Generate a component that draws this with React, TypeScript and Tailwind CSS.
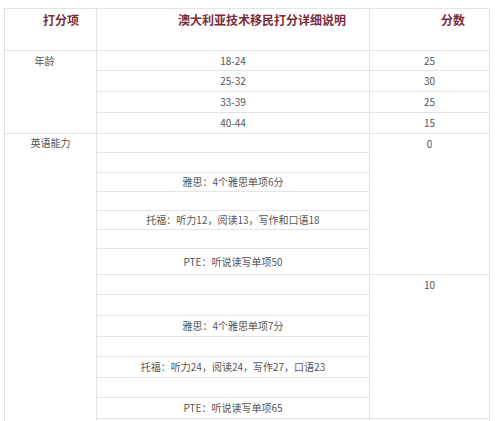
// 澳大利亚技术移民打分表 截图复刻

const ageRows = [
  { range: "18-24", score: "25", h: "h-[20px]" },
  { range: "25-32", score: "30", h: "h-[21px]" },
  { range: "33-39", score: "25", h: "h-[21px]" },
  { range: "40-44", score: "15", h: "h-[21px]" },
];

const englishBlocks = [
  {
    score: "0",
    rows: [
      { text: "", h: "h-[19px]" },
      { text: "", h: "h-[20px]" },
      { text: "雅思：4个雅思单项6分", h: "h-[19px]" },
      { text: "", h: "h-[19px]" },
      { text: "托福：听力12，阅读13，写作和口语18", h: "h-[19px]" },
      { text: "", h: "h-[19px]" },
      { text: "PTE：听说读写单项50", h: "h-[26px]" },
    ],
  },
  {
    score: "10",
    rows: [
      { text: "", h: "h-[20px]" },
      { text: "", h: "h-[21px]" },
      { text: "雅思：4个雅思单项7分", h: "h-[21px]" },
      { text: "", h: "h-[20px]" },
      { text: "托福：听力24，阅读24，写作27，口语23", h: "h-[21px]" },
      { text: "", h: "h-[20px]" },
      { text: "PTE：听说读写单项65", h: "h-[21px]" },
    ],
  },
];

const cell = "border border-[#e4e4e4] p-0";

export default function App() {
  return (
    <div className="h-[421px] overflow-hidden bg-white pl-[4px] pt-[8px] font-['Noto_Sans_CJK_SC','Noto_Sans',sans-serif] text-[10px] text-[#555]">
      <table className="w-[485px] table-fixed border-collapse">
        <colgroup>
          <col className="w-[92px]" />
          <col className="w-[273px]" />
          <col className="w-[120px]" />
        </colgroup>
        <tbody>
          {/* 表头 */}
          <tr className="h-[42px] align-top text-[12px] font-bold leading-[16px] text-[#7b2d3b]">
            <td className={`${cell} pl-[38px] pt-[3px]`}>打分项</td>
            <td className={`${cell} pl-[81px] pt-[3px]`}>澳大利亚技术移民打分详细说明</td>
            <td className={`${cell} pl-[71px] pt-[3px]`}>分数</td>
          </tr>

          {/* 年龄 */}
          {ageRows.map((row, i) => (
            <tr key={row.range} className={`${row.h} leading-[14px]`}>
              {i === 0 && (
                <td rowSpan={4} className={`${cell} pr-[12px] pt-[3px] text-center align-top`}>
                  年龄
                </td>
              )}
              <td className={`${cell} text-center`}>{row.range}</td>
              <td className={`${cell} text-center`}>{row.score}</td>
            </tr>
          ))}

          {/* 英语能力 */}
          {englishBlocks.map((block, b) =>
            block.rows.map((row, i) => (
              <tr key={`${b}-${i}`} className={`${row.h} leading-[14px]`}>
                {b === 0 && i === 0 && (
                  <td rowSpan={15} className={`${cell} pt-[2px] text-center align-top`}>
                    英语能力
                  </td>
                )}
                <td className={`${cell} text-center`}>{row.text}</td>
                {i === 0 && (
                  <td rowSpan={7} className={`${cell} pt-[3px] text-center align-top`}>
                    {block.score}
                  </td>
                )}
              </tr>
            ))
          )}
          <tr className="h-[20px]">
            <td className={cell}></td>
            <td className={cell}></td>
          </tr>
        </tbody>
      </table>
    </div>
  );
}
